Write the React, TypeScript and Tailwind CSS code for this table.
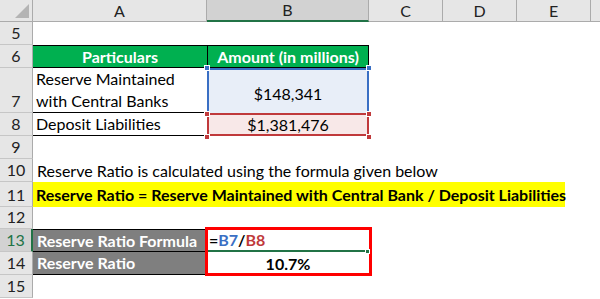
import type { ReactNode } from 'react';

const font = { fontFamily: 'Lato, "Liberation Sans", sans-serif' };

function Gutter({ n, h, active }: { n: number; h: string; active?: boolean }) {
  return (
    <div
      className={`${h} w-[33px] shrink-0 flex items-end justify-center pb-[1px] border-b border-[#c6c6c6] text-[16px] leading-[20px] ${
        active ? 'bg-[#d2d2d2] text-[#217346] border-r-2 border-r-[#217346]' : 'bg-[#e6e6e6] text-[#222] border-r border-r-[#ababab]'
      }`}
    >
      {n}
    </div>
  );
}

function Row({ n, h, active, children }: { n: number; h: string; active?: boolean; children?: ReactNode }) {
  return (
    <div className={`flex ${h}`}>
      <Gutter n={n} h={h} active={active} />
      <div className="flex flex-1 min-w-0">{children}</div>
    </div>
  );
}

function Handle({ className }: { className: string }) {
  return <div className={`absolute w-[6px] h-[6px] border border-white ${className}`} />;
}

export default function App() {
  return (
    <div className="relative w-[600px] h-[299px] overflow-hidden bg-white text-black text-[16px]" style={font}>
      {/* column header */}
      <div className="flex h-[22px] text-[16px] text-[#222]">
        <div className="relative w-[33px] shrink-0 bg-[#e6e6e6] border-r border-b border-[#ababab]">
          <svg className="absolute right-[3px] bottom-[3px]" width="14" height="14" viewBox="0 0 14 14">
            <polygon points="14,0 14,14 0,14" fill="#b4b4b4" />
          </svg>
        </div>
        <div className="w-[174px] shrink-0 bg-[#e6e6e6] border-r border-b border-[#ababab] flex items-center justify-center">A</div>
        <div className="w-[162px] shrink-0 bg-[#d2d2d2] border-r border-r-[#ababab] border-b-2 border-b-[#217346] flex items-center justify-center">B</div>
        <div className="w-[74px] shrink-0 bg-[#e6e6e6] border-r border-b border-[#ababab] flex items-center justify-center">C</div>
        <div className="w-[74px] shrink-0 bg-[#e6e6e6] border-r border-b border-[#ababab] flex items-center justify-center">D</div>
        <div className="w-[74px] shrink-0 bg-[#e6e6e6] border-r border-b border-[#ababab] flex items-center justify-center">E</div>
        <div className="flex-1 bg-[#e6e6e6] border-b border-[#ababab]" />
      </div>

      <Row n={5} h="h-[23px]" />

      <Row n={6} h="h-[23px]">
        <div className="w-[174px] shrink-0 bg-[#00b050] border-t border-b border-black flex items-center justify-center text-white font-bold">
          Particulars
        </div>
        <div className="w-[162px] shrink-0 bg-[#00b050] border border-black flex items-center justify-center text-white font-bold whitespace-nowrap">
          Amount (in millions)
        </div>
      </Row>

      <Row n={7} h="h-[45px]">
        <div className="w-[174px] shrink-0 border-b border-black px-[3px] leading-[22px] flex flex-col justify-end whitespace-nowrap">
          <span>Reserve Maintained</span>
          <span>with Central Banks</span>
        </div>
        <div className="w-[162px] shrink-0 bg-[#e8eef8] border-x-2 border-t-2 border-[#3a6fc4] flex items-center justify-center pt-[4px]">
          $148,341
        </div>
      </Row>

      <Row n={8} h="h-[23px]">
        <div className="w-[174px] shrink-0 border-b border-black px-[3px] flex items-center">Deposit Liabilities</div>
        <div className="w-[162px] shrink-0 bg-[#f8e8e8] border-2 border-[#c0393b] flex items-center justify-center">
          $1,381,476
        </div>
      </Row>

      <Row n={9} h="h-[23px]" />

      <Row n={10} h="h-[23px]">
        <div className="px-[4px] flex items-center whitespace-nowrap">Reserve Ratio is calculated using the formula given below</div>
      </Row>

      <Row n={11} h="h-[25px]">
        <div className="w-[532px] shrink-0 bg-[#ffff00] px-[3px] font-bold flex items-center whitespace-nowrap">
          Reserve Ratio = Reserve Maintained with Central Bank / Deposit Liabilities
        </div>
      </Row>

      <Row n={12} h="h-[22px]" />

      <Row n={13} h="h-[23px]" active>
        <div className="w-[174px] shrink-0 bg-[#7f7f7f] border-y border-black px-[4px] text-white font-bold flex items-center whitespace-nowrap">
          Reserve Ratio Formula
        </div>
        <div className="w-[162px] shrink-0 border-b-2 border-[#217346] px-[2px] font-bold flex items-center">
          <span>=</span>
          <span className="text-[#3a6fc4]">B7</span>
          <span>/</span>
          <span className="text-[#c0393b]">B8</span>
        </div>
      </Row>

      <Row n={14} h="h-[23px]">
        <div className="w-[174px] shrink-0 bg-[#7f7f7f] border-b border-black px-[4px] text-white font-bold flex items-center">
          Reserve Ratio
        </div>
        <div className="w-[162px] shrink-0 font-bold flex items-center justify-center">10.7%</div>
      </Row>

      <Row n={15} h="h-[23px]" />

      {/* selection handles */}
      <Handle className="left-[204px] top-[65px] bg-[#3a6fc4]" />
      <Handle className="left-[366px] top-[65px] bg-[#3a6fc4]" />
      <Handle className="left-[204px] top-[111px] bg-[#c0393b]" />
      <Handle className="left-[366px] top-[111px] bg-[#c0393b]" />
      <Handle className="left-[204px] top-[134px] bg-[#c0393b]" />
      <Handle className="left-[366px] top-[134px] bg-[#c0393b]" />

      {/* red highlight box */}
      <div className="absolute left-[205px] top-[227px] w-[167px] h-[49px] border-[3px] border-[#ff0000]" />
      <div className="absolute left-[365px] top-[249px] w-[5px] h-[5px] bg-[#217346] border border-white" />
    </div>
  );
}
